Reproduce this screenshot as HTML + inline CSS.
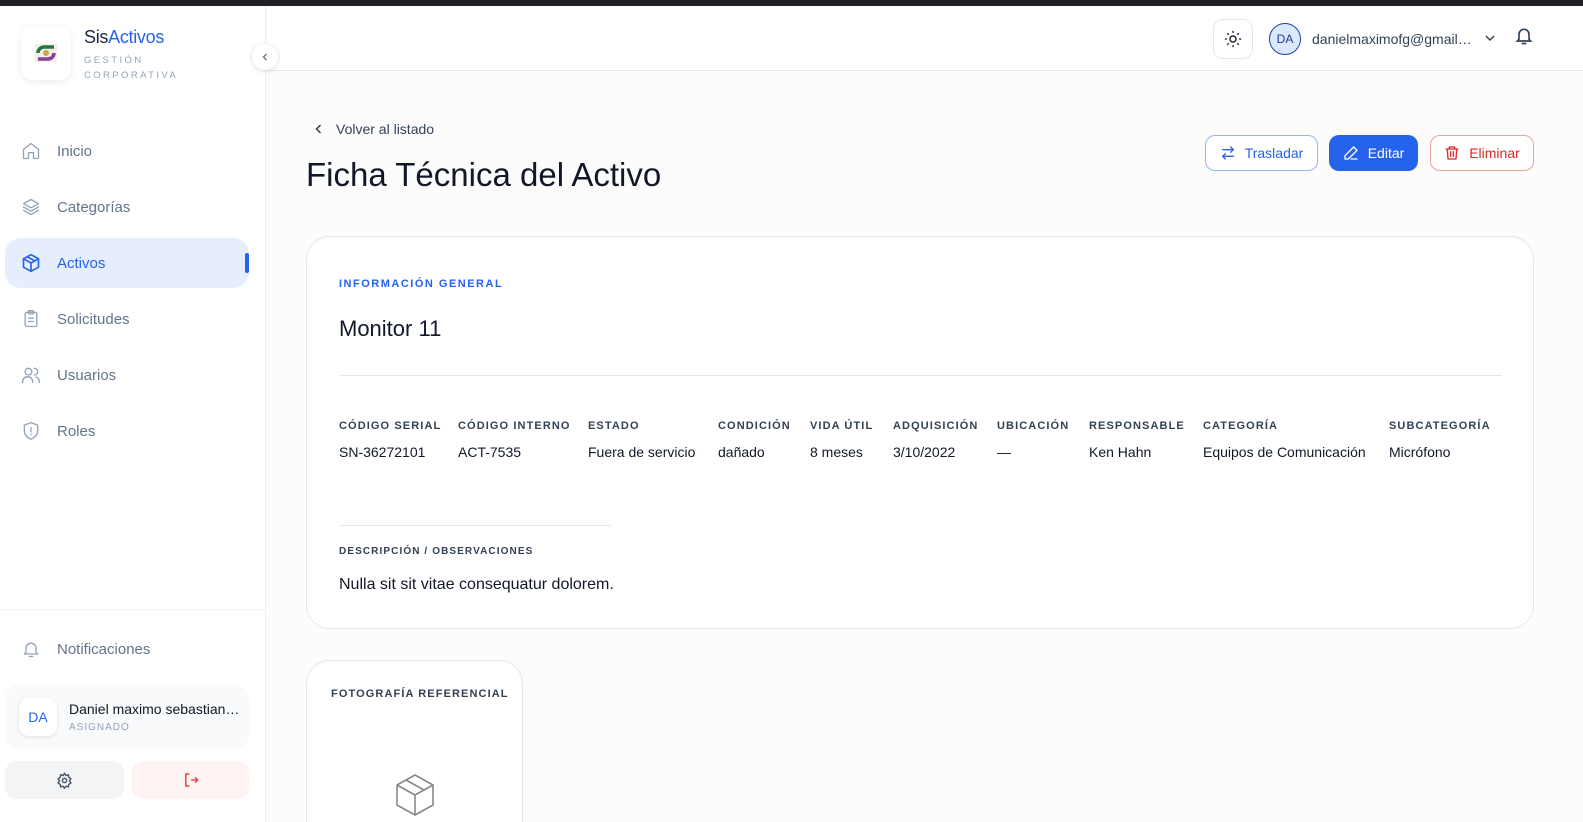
<!DOCTYPE html>
<html style="width:1583px;height:822px;overflow:hidden"><head><meta charset="utf-8"><style>
*{box-sizing:border-box;margin:0;padding:0}
body{width:1583px;height:822px;overflow:hidden;font-family:"Liberation Sans",sans-serif;background:#fcfcfd;color:#111827}
#w{position:relative;width:1583px;height:822px;overflow:hidden}
.topbar{position:absolute;left:0;top:0;width:1583px;height:6px;background:#202124}
.side{position:absolute;left:0;top:6px;width:266px;height:816px;background:#fff;border-right:1px solid #eceef2}
.abs{position:absolute}
.nav{position:absolute;left:5px;width:244px;height:50px;border-radius:16px;display:flex;align-items:center;padding-left:16px;font-size:15px;color:#64748b}
.nav svg{width:20px;height:20px;margin-right:16px;stroke:#94a3b8;fill:none;stroke-width:1.6;stroke-linecap:round;stroke-linejoin:round}
.nav.act{background:#e6edfd;color:#2563eb}
.nav.act svg{stroke:#2563eb;stroke-width:2}
.lbl{font-size:11px;font-weight:bold;letter-spacing:1.1px;color:#334155}
.val{font-size:14px;color:#111827}
.btn{position:absolute;top:135px;height:36px;border-radius:10px;display:flex;align-items:center;justify-content:center;font-size:14px}
.btn svg{width:16px;height:16px;fill:none;stroke-width:2;stroke-linecap:round;stroke-linejoin:round;margin-right:9px}
</style></head><body><div id="w">
<div class="topbar"></div>
<div class="side">
 <div class="abs" style="left:21px;top:20px;width:50px;height:54px;background:#fff;border-radius:12px;box-shadow:0 2px 8px rgba(0,0,0,.08);display:flex;align-items:center;justify-content:center">
  <svg width="26" height="30" viewBox="0 0 26 30"><rect x="2" y="6" width="22" height="18" fill="#f2efe6"/><path d="M5 15 a6 6 0 0 1 6-6 h10" stroke="#1f7a3a" stroke-width="3.5" fill="none"/><path d="M21 15 a6 6 0 0 1-6 6 H5" stroke="#8b3f9c" stroke-width="3.5" fill="none"/><circle cx="13" cy="15" r="3" fill="#c9a64a"/></svg>
 </div>
 <div class="abs" style="left:84px;top:21px;font-size:18px;letter-spacing:-0.3px"><span style="color:#1e293b">Sis</span><span style="color:#2563eb">Activos</span></div>
 <div class="abs" style="left:84px;top:47px;font-size:9.5px;letter-spacing:2.4px;color:#94a3b8;line-height:15px">GESTIÓN<br>CORPORATIVA</div>
 <div class="abs" style="left:252px;top:38px;width:26px;height:26px;border-radius:50%;background:#fff;box-shadow:0 1px 5px rgba(0,0,0,.15);display:flex;align-items:center;justify-content:center;z-index:3"><svg width="10" height="10" viewBox="0 0 10 10"><path d="M6.5 2 L3.5 5 L6.5 8" stroke="#64748b" stroke-width="1.4" fill="none"/></svg></div>
 <div class="nav" style="top:120px"><svg viewBox="0 0 24 24"><path d="M3 10l9-7 9 7v10a1 1 0 0 1-1 1h-5v-7h-6v7H4a1 1 0 0 1-1-1z"/></svg>Inicio</div>
 <div class="nav" style="top:176px"><svg viewBox="0 0 24 24"><path d="M12 3l9 5-9 5-9-5z"/><path d="M3 12l9 5 9-5"/><path d="M3 16l9 5 9-5"/></svg>Categorías</div>
 <div class="nav act" style="top:232px"><svg viewBox="0 0 24 24"><path d="M12 2l9 5v10l-9 5-9-5V7z"/><path d="M3 7l9 5 9-5M12 12v10M7.5 4.5l9 5"/></svg>Activos<div class="abs" style="right:0;top:15px;width:4px;height:20px;background:#2563eb;border-radius:2px"></div></div>
 <div class="nav" style="top:288px"><svg viewBox="0 0 24 24"><rect x="5" y="4" width="14" height="17" rx="2"/><rect x="9" y="2" width="6" height="4" rx="1"/><path d="M9 11h6M9 15h6"/></svg>Solicitudes</div>
 <div class="nav" style="top:344px"><svg viewBox="0 0 24 24"><circle cx="9" cy="8" r="4"/><path d="M2 21v-1a6 6 0 0 1 12 0v1"/><path d="M16 4a4 4 0 0 1 0 8M22 21v-1a6 6 0 0 0-4-5.6"/></svg>Usuarios</div>
 <div class="nav" style="top:400px"><svg viewBox="0 0 24 24"><path d="M12 2l8 3v7c0 5-4 8-8 10-4-2-8-5-8-10V5z"/><path d="M12 8v5M12 16v.5"/></svg>Roles</div>
 <div class="abs" style="left:0;top:603px;width:265px;border-top:1px solid #eef0f3"></div>
 <div class="nav" style="top:618px"><svg viewBox="0 0 24 24"><path d="M6 16V11a6 6 0 0 1 12 0v5l2 2H4z"/><path d="M10 21h4"/></svg>Notificaciones</div>
 <div class="abs" style="left:5px;top:678px;width:244px;height:65px;background:#f8fafc;border-radius:16px"></div>
 <div class="abs" style="left:19px;top:692px;width:38px;height:38px;background:#fff;border-radius:10px;box-shadow:0 1px 4px rgba(0,0,0,.1);display:flex;align-items:center;justify-content:center;color:#2563eb;font-size:14px">DA</div>
 <div class="abs" style="left:69px;top:695px;font-size:14px;color:#111827">Daniel maximo sebastian…</div>
 <div class="abs" style="left:69px;top:716px;font-size:10px;letter-spacing:1px;color:#94a3b8">ASIGNADO</div>
 <div class="abs" style="left:5px;top:755px;width:119px;height:38px;background:#f3f4f6;border-radius:12px;display:flex;align-items:center;justify-content:center"><svg width="17" height="17" viewBox="0 0 24 24" fill="none" stroke="#475569" stroke-width="2"><circle cx="12" cy="12" r="3"/><path d="M12 2l2 3 3.5-1 .5 3.5 3 2-2 3 2 3-3 2-.5 3.5-3.5-1-2 3-2-3-3.5 1-.5-3.5-3-2 2-3-2-3 3-2 .5-3.5 3.5 1z"/></svg></div>
 <div class="abs" style="left:132px;top:755px;width:117px;height:38px;background:#fef2f2;border-radius:12px;display:flex;align-items:center;justify-content:center"><svg width="18" height="18" viewBox="0 0 24 24" fill="none" stroke="#ef4444" stroke-width="2" stroke-linecap="round" stroke-linejoin="round"><path d="M9 4H5v16h4M13 12h8M18 9l3 3-3 3"/></svg></div>
</div>
<div class="abs" style="left:267px;top:6px;width:1316px;height:65px;background:#fff;border-bottom:1px solid #e5e7eb"></div>
<div class="abs" style="left:1213px;top:19px;width:40px;height:40px;border:1px solid #e5e7eb;border-radius:10px;display:flex;align-items:center;justify-content:center"><svg width="18" height="18" viewBox="0 0 24 24" fill="none" stroke="#1f2937" stroke-width="2" stroke-linecap="round"><circle cx="12" cy="12" r="4"/><path d="M12 2v1M12 21v1M2 12h1M21 12h1M4.9 4.9l.7.7M18.4 18.4l.7.7M4.9 19.1l.7-.7M18.4 5.6l.7-.7"/></svg></div>
<div class="abs" style="left:1269px;top:23px;width:32px;height:32px;border-radius:50%;background:#dbe8fe;border:1.5px solid #1e40af;display:flex;align-items:center;justify-content:center;font-size:12px;color:#1e3a8a">DA</div>
<div class="abs" style="left:1312px;top:31px;font-size:14px;color:#334155">danielmaximofg@gmail…</div>
<svg class="abs" style="left:1484px;top:32px" width="12" height="12" viewBox="0 0 12 12"><path d="M2 4l4 4 4-4" stroke="#334155" stroke-width="1.5" fill="none"/></svg>
<svg class="abs" style="left:1514px;top:26px" width="20" height="20" viewBox="0 0 24 24" fill="none" stroke="#334155" stroke-width="2" stroke-linecap="round"><path d="M6 16V10a6 6 0 0 1 12 0v6l2 2H4z"/><path d="M10 21h4"/></svg>

<svg class="abs" style="left:313px;top:123px" width="12" height="12" viewBox="0 0 12 12"><path d="M7.5 2L3.5 6l4 4" stroke="#334155" stroke-width="1.5" fill="none"/></svg>
<div class="abs" style="left:336px;top:121px;font-size:14px;color:#334155">Volver al listado</div>
<div class="abs" style="left:306px;top:156px;font-size:33px;color:#111827">Ficha Técnica del Activo</div>

<div class="btn" style="left:1205px;width:113px;border:1px solid #93b4f8;color:#2563eb;background:#fff"><svg viewBox="0 0 24 24" stroke="#2563eb"><path d="M20 7H4M16 3l4 4-4 4M4 17h16M8 13l-4 4 4 4"/></svg>Trasladar</div>
<div class="btn" style="left:1329px;width:89px;background:#2563eb;color:#fff"><svg viewBox="0 0 24 24" stroke="#fff"><path d="M16 3l5 5L8 21H3v-5z"/><path d="M12 21h9"/></svg>Editar</div>
<div class="btn" style="left:1430px;width:104px;border:1px solid #f0a0a0;color:#dc2626;background:#fff"><svg viewBox="0 0 24 24" stroke="#dc2626"><path d="M3 6h18M8 6V3h8v3M5 6l1 15h12l1-15M10 10v7M14 10v7"/></svg>Eliminar</div>

<div class="abs" style="left:306px;top:236px;width:1228px;height:393px;background:#fff;border:1px solid #e5e7eb;border-radius:24px"></div>
<div class="abs lbl" style="left:339px;top:278px;color:#2563eb;letter-spacing:1.5px">INFORMACIÓN GENERAL</div>
<div class="abs" style="left:339px;top:316px;font-size:22px">Monitor 11</div>
<div class="abs" style="left:339px;top:375px;width:1163px;border-top:1px solid #e5e7eb"></div>
<div class="abs lbl" style="left:339px;top:420px">CÓDIGO SERIAL</div><div class="abs val" style="left:339px;top:444px">SN-36272101</div>
<div class="abs lbl" style="left:458px;top:420px">CÓDIGO INTERNO</div><div class="abs val" style="left:458px;top:444px">ACT-7535</div>
<div class="abs lbl" style="left:588px;top:420px">ESTADO</div><div class="abs val" style="left:588px;top:444px">Fuera de servicio</div>
<div class="abs lbl" style="left:718px;top:420px">CONDICIÓN</div><div class="abs val" style="left:718px;top:444px">dañado</div>
<div class="abs lbl" style="left:810px;top:420px">VIDA ÚTIL</div><div class="abs val" style="left:810px;top:444px">8 meses</div>
<div class="abs lbl" style="left:893px;top:420px">ADQUISICIÓN</div><div class="abs val" style="left:893px;top:444px">3/10/2022</div>
<div class="abs lbl" style="left:997px;top:420px">UBICACIÓN</div><div class="abs val" style="left:997px;top:444px">—</div>
<div class="abs lbl" style="left:1089px;top:420px">RESPONSABLE</div><div class="abs val" style="left:1089px;top:444px">Ken Hahn</div>
<div class="abs lbl" style="left:1203px;top:420px">CATEGORÍA</div><div class="abs val" style="left:1203px;top:444px">Equipos de Comunicación</div>
<div class="abs lbl" style="left:1389px;top:420px">SUBCATEGORÍA</div><div class="abs val" style="left:1389px;top:444px">Micrófono</div>
<div class="abs" style="left:339px;top:525px;width:272px;border-top:1px solid #e5e7eb"></div>
<div class="abs lbl" style="left:339px;top:546px;font-size:10px">DESCRIPCIÓN / OBSERVACIONES</div>
<div class="abs" style="left:339px;top:576px;font-size:16px">Nulla sit sit vitae consequatur dolorem.</div>

<div class="abs" style="left:306px;top:660px;width:217px;height:200px;background:#fff;border:1px solid #e5e7eb;border-radius:24px"></div>
<div class="abs lbl" style="left:331px;top:688px;font-size:11px">FOTOGRAFÍA REFERENCIAL</div>
<svg class="abs" style="left:395px;top:773px" width="40" height="44" viewBox="0 0 40 44" fill="none" stroke="#888" stroke-width="1.6" stroke-linejoin="round"><path d="M20 2L38 12v20L20 42 2 32V12z"/><path d="M2 12l18 10 18-10M20 22v20M11 7l18 10"/></svg>
</div></body></html>
